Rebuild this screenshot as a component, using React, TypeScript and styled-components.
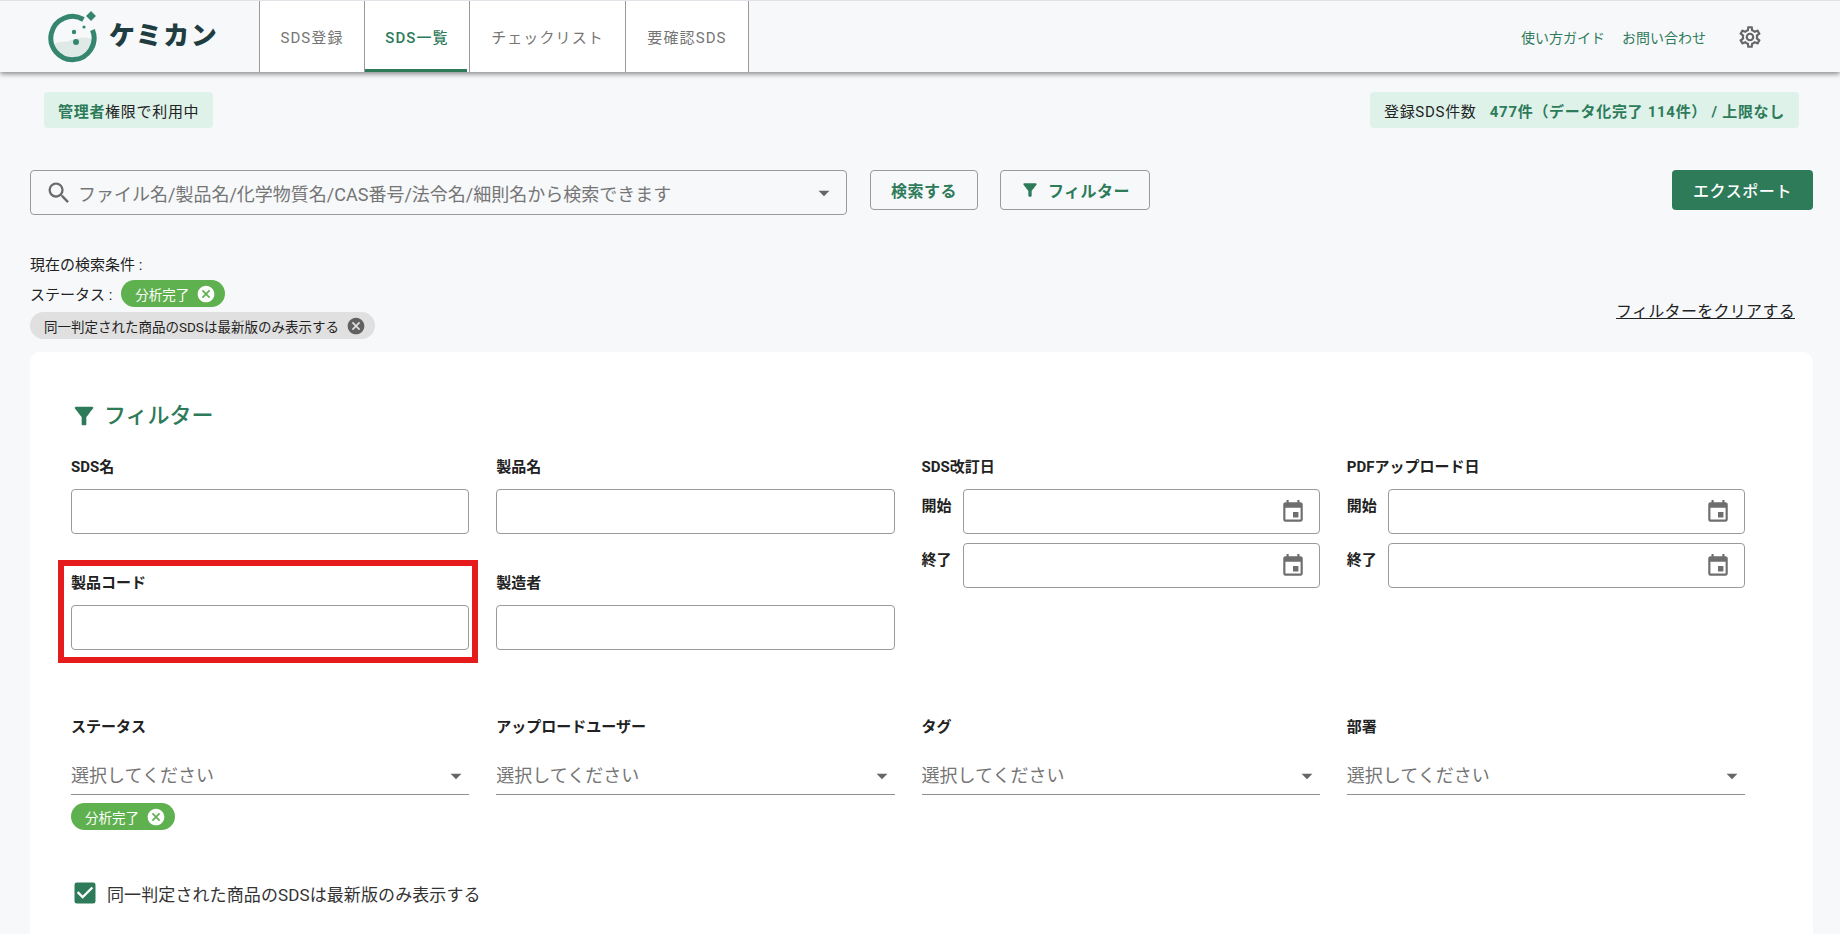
import React from 'react';
import styled, { createGlobalStyle } from 'styled-components';
import { MdArrowDropDown, MdCancel, MdCheckBox, MdEvent, MdFilterAlt, MdOutlineSettings, MdSearch } from 'react-icons/md';

const green = '#2e7b5a';
const line = '#9a9a9a';

const GlobalStyle = createGlobalStyle`
  html, body {
    margin: 0;
    height: 100%;
    overflow: hidden;
    background: #f6f8fa;
    color: #222;
    font-family: Roboto, "Noto Sans CJK JP", sans-serif;
  }
  * { box-sizing: border-box; }
`;

const Page = styled.div`
  width: 1840px;
  height: 934px;
  overflow: hidden;
  display: flex;
  flex-direction: column;
`;

const Header = styled.header`
  height: 72px;
  flex: none;
  display: flex;
  align-items: stretch;
  border-top: 1px solid #e4e2e8;
  background: #f7f8fa;
  box-shadow: 0 2px 5px rgba(0, 0, 0, 0.45);
  position: relative;
`;

const Logo = styled.div`
  width: 259px;
  display: flex;
  align-items: center;
  padding-left: 47px;
  gap: 10px;
`;

const LogoText = styled.span`
  font-size: 26px;
  font-weight: 900;
  letter-spacing: 1.5px;
  color: #1f3d40;
  line-height: 1;
  margin-top: -2px;
`;

const Tabs = styled.nav`
  display: flex;
  border-right: 1px solid ${line};
`;

const Tab = styled.div<{ $active?: boolean; $width: number }>`
  width: ${p => p.$width}px;
  background: #fff;
  border-left: 1px solid ${line};
  display: flex;
  align-items: center;
  justify-content: center;
  position: relative;
  font-size: 15px;
  font-weight: ${p => (p.$active ? 500 : 400)};
  letter-spacing: 1.1px;
  color: ${p => (p.$active ? green : '#757575')};
  &::after {
    content: '';
    display: ${p => (p.$active ? 'block' : 'none')};
    position: absolute;
    left: 0;
    right: 2px;
    bottom: 0;
    height: 3px;
    background: ${green};
  }
`;

const HeaderLinks = styled.div`
  margin-left: auto;
  display: flex;
  align-items: center;
  padding-right: 77px;
  font-size: 14px;
  color: ${green};
`;

const HeaderLink = styled.span`
  margin-left: 17px;
`;

const GearIcon = styled(MdOutlineSettings)`
  font-size: 26px;
  color: #666;
  margin-left: 31px;
`;

const StatusRow = styled.div`
  display: flex;
  justify-content: space-between;
  margin-top: 20px;
  padding: 0 41px 0 44px;
`;

const StatusBadge = styled.div`
  height: 36px;
  padding: 0 14px;
  display: flex;
  align-items: center;
  background: #def2ea;
  border-radius: 4px;
  font-size: 15px;
  letter-spacing: 0.7px;
  white-space: pre;
`;

const StrongGreen = styled.strong`
  color: ${green};
  font-weight: 700;
`;

const SearchRow = styled.div`
  display: flex;
  align-items: flex-start;
  margin-top: 42px;
  padding: 0 27px 0 30px;
`;

const SearchBox = styled.div`
  width: 817px;
  height: 45px;
  border: 1px solid ${line};
  border-radius: 4px;
  display: flex;
  align-items: center;
  padding: 0 9px 0 14px;
  color: #757575;
  font-size: 18px;
  white-space: nowrap;
`;

const SearchIcon = styled(MdSearch)`
  font-size: 28px;
  flex: none;
  color: #6b6b6b;
  margin-right: 5px;
`;

const SearchArrow = styled(MdArrowDropDown)`
  font-size: 26px;
  margin-left: auto;
  color: #666;
`;

const OutlineButton = styled.button<{ $width: number; $gap: number }>`
  width: ${p => p.$width}px;
  height: 40px;
  margin-left: ${p => p.$gap}px;
  border: 1px solid ${line};
  border-radius: 4px;
  background: transparent;
  color: ${green};
  font: 700 16px Roboto, "Noto Sans CJK JP", sans-serif;
  letter-spacing: 0.5px;
  display: flex;
  align-items: center;
  justify-content: center;
  gap: 8px;
`;

const ExportButton = styled.button`
  width: 141px;
  height: 40px;
  margin-left: auto;
  border: 0;
  border-radius: 4px;
  background: ${green};
  color: #fff;
  font: 500 16px Roboto, "Noto Sans CJK JP", sans-serif;
  letter-spacing: 0.6px;
`;

const ConditionRow = styled.div`
  display: flex;
  justify-content: space-between;
  margin-top: 38px;
  padding: 0 45px 0 30px;
`;

const ConditionList = styled.div`
  display: flex;
  flex-direction: column;
  align-items: flex-start;
  font-size: 15px;
`;

const ConditionLine = styled.div`
  display: flex;
  align-items: center;
  height: 27px;
  margin-bottom: 5px;
  &:first-child {
    height: 20px;
    margin-bottom: 7px;
  }
  &:last-child {
    margin-bottom: 0;
  }
`;

const ConditionName = styled.span`
  margin-right: 9px;
`;

const Chip = styled.span<{ $grey?: boolean }>`
  height: 27px;
  display: inline-flex;
  align-items: center;
  border-radius: 14px;
  padding: 0 9px 0 14px;
  font-size: 13.5px;
  background: ${p => (p.$grey ? '#e0e0e0' : '#5fb04e')};
  color: ${p => (p.$grey ? '#222' : '#fff')};
`;

const ChipClose = styled(MdCancel)<{ $grey?: boolean }>`
  font-size: 20px;
  margin-left: 7px;
  color: ${p => (p.$grey ? '#616161' : '#fff')};
`;

const ClearLink = styled.a`
  align-self: flex-end;
  margin-bottom: 17px;
  font-size: 16px;
  text-decoration: underline;
  color: #222;
  letter-spacing: 0.3px;
`;

const Card = styled.section`
  flex: 1;
  margin: 13px 27px 0 30px;
  padding: 43px 68px 0 41px;
  background: #fff;
  border-radius: 10px 10px 0 0;
  position: relative;
`;

const CardTitle = styled.h2`
  margin: 0;
  height: 36px;
  display: flex;
  align-items: center;
  gap: 6px;
  font-size: 22px;
  font-weight: 500;
  color: ${green};
`;

const TitleIcon = styled(MdFilterAlt)`
  font-size: 28px;
  margin: 6px 0 0 -1px;
`;

const FieldGrid = styled.div`
  display: grid;
  grid-template-columns: repeat(4, 1fr);
  column-gap: 27px;
  row-gap: 38px;
  margin-top: 25px;
`;

const Field = styled.div<{ $tall?: boolean }>`
  ${p => (p.$tall ? 'grid-row: span 2;' : '')}
`;

const Label = styled.div`
  height: 22px;
  line-height: 22px;
  margin-bottom: 11px;
  font-size: 15px;
  font-weight: 700;
  color: #222;
`;

const TextInput = styled.div`
  height: 45px;
  border: 1px solid ${line};
  border-radius: 4px;
  background: #fff;
`;

const DateRow = styled.div`
  display: flex;
  margin-bottom: 9px;
`;

const DateLabel = styled.span`
  width: 41px;
  flex: none;
  padding-top: 5px;
  font-size: 15px;
  font-weight: 700;
`;

const DateInput = styled(TextInput)`
  flex: 1;
  display: flex;
  align-items: center;
  justify-content: flex-end;
  padding-right: 13px;
`;

const CalendarIcon = styled(MdEvent)`
  font-size: 26px;
  color: #6e6e6e;
`;

const SelectGrid = styled(FieldGrid)`
  margin-top: 66px;
`;

const SelectBox = styled.div`
  height: 51px;
  margin-top: -5px;
  padding-top: 9px;
  display: flex;
  align-items: center;
  border-bottom: 1px solid #8f8f8f;
  font-size: 18px;
  color: #757575;
`;

const SelectArrow = styled(MdArrowDropDown)`
  font-size: 26px;
  margin: 5px 0 0 auto;
  color: #666;
`;

const SelectedChip = styled(Chip)`
  margin-top: 8px;
`;

const CheckRow = styled.label`
  display: flex;
  align-items: center;
  gap: 8px;
  margin-top: 49px;
  font-size: 17px;
  letter-spacing: 0.1px;
  color: #333;
`;

const CheckIcon = styled(MdCheckBox)`
  font-size: 28px;
  color: ${green};
  flex: none;
`;

const Highlight = styled.div`
  position: absolute;
  left: 28px;
  top: 208px;
  width: 420px;
  height: 103px;
  border: 6px solid #e61c1c;
  pointer-events: none;
`;

const LogoMark = () => (
  <svg width="52" height="52" viewBox="0 0 52 52" fill="none">
    <path d="M6 35c4-6 10-3 16-5s16-6 24-1c0 9-8 18-20 18-10 0-17-5-20-12z" fill="#dfeae6" />
    <path d="M36.5 8.5A21.6 21.6 0 1 0 45.5 19" stroke="#35856f" strokeWidth="5" />
    <rect x="40.5" y="1.5" width="7" height="7" transform="rotate(45 44 5)" fill="#35856f" />
    <circle cx="27" cy="21" r="2.2" fill="#35856f" />
    <circle cx="29" cy="31" r="3" fill="#35856f" />
    <circle cx="37" cy="16" r="1.6" fill="#35856f" />
  </svg>
);

const DateField = ({ label }: { label: string }) => (
  <Field $tall>
    <Label>{label}</Label>
    {['開始', '終了'].map(name => (
      <DateRow key={name}>
        <DateLabel>{name}</DateLabel>
        <DateInput>
          <CalendarIcon />
        </DateInput>
      </DateRow>
    ))}
  </Field>
);

const SelectField = ({ label, children }: { label: string; children?: React.ReactNode }) => (
  <Field>
    <Label>{label}</Label>
    <SelectBox>
      選択してください
      <SelectArrow />
    </SelectBox>
    {children}
  </Field>
);

export default function App() {
  return (
    <Page>
      <GlobalStyle />
      <Header>
        <Logo>
          <LogoMark />
          <LogoText>ケミカン</LogoText>
        </Logo>
        <Tabs>
          <Tab $width={105}>SDS登録</Tab>
          <Tab $width={105} $active>SDS一覧</Tab>
          <Tab $width={156}>チェックリスト</Tab>
          <Tab $width={123}>要確認SDS</Tab>
        </Tabs>
        <HeaderLinks>
          <HeaderLink>使い方ガイド</HeaderLink>
          <HeaderLink>お問い合わせ</HeaderLink>
          <GearIcon />
        </HeaderLinks>
      </Header>

      <StatusRow>
        <StatusBadge>
          <span><StrongGreen>管理者</StrongGreen>権限で利用中</span>
        </StatusBadge>
        <StatusBadge>
          登録SDS件数{'   '}<StrongGreen>477件（データ化完了 114件） / 上限なし</StrongGreen>
        </StatusBadge>
      </StatusRow>

      <SearchRow>
        <SearchBox>
          <SearchIcon />
          ファイル名/製品名/化学物質名/CAS番号/法令名/細則名から検索できます
          <SearchArrow />
        </SearchBox>
        <OutlineButton $width={108} $gap={23}>検索する</OutlineButton>
        <OutlineButton $width={150} $gap={22}>
          <MdFilterAlt size={20} />
          フィルター
        </OutlineButton>
        <ExportButton>エクスポート</ExportButton>
      </SearchRow>

      <ConditionRow>
        <ConditionList>
          <ConditionLine>現在の検索条件 :</ConditionLine>
          <ConditionLine>
            <ConditionName>ステータス :</ConditionName>
            <Chip>分析完了<ChipClose /></Chip>
          </ConditionLine>
          <ConditionLine>
            <Chip $grey>同一判定された商品のSDSは最新版のみ表示する<ChipClose $grey /></Chip>
          </ConditionLine>
        </ConditionList>
        <ClearLink>フィルターをクリアする</ClearLink>
      </ConditionRow>

      <Card>
        <CardTitle>
          <TitleIcon />
          フィルター
        </CardTitle>
        <FieldGrid>
          <Field>
            <Label>SDS名</Label>
            <TextInput />
          </Field>
          <Field>
            <Label>製品名</Label>
            <TextInput />
          </Field>
          <DateField label="SDS改訂日" />
          <DateField label="PDFアップロード日" />
          <Field>
            <Label>製品コード</Label>
            <TextInput />
          </Field>
          <Field>
            <Label>製造者</Label>
            <TextInput />
          </Field>
        </FieldGrid>
        <SelectGrid>
          <SelectField label="ステータス">
            <SelectedChip>分析完了<ChipClose /></SelectedChip>
          </SelectField>
          <SelectField label="アップロードユーザー" />
          <SelectField label="タグ" />
          <SelectField label="部署" />
        </SelectGrid>
        <CheckRow>
          <CheckIcon />
          同一判定された商品のSDSは最新版のみ表示する
        </CheckRow>
        <Highlight />
      </Card>
    </Page>
  );
}
